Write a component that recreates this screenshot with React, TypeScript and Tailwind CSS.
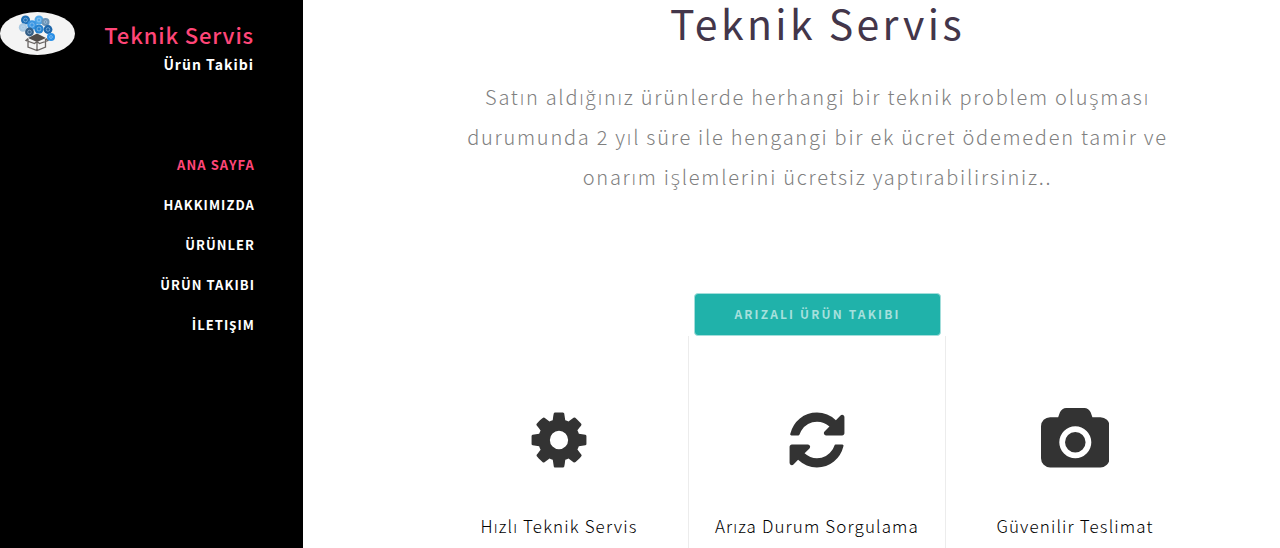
import type { ReactNode } from "react";

const navItems: { label: ReactNode; key: string; active?: boolean }[] = [
  { key: "home", label: "ANA SAYFA", active: true },
  { key: "about", label: "HAKKIMIZDA" },
  { key: "products", label: "ÜRÜNLER" },
  { key: "tracking", label: "ÜRÜN TAKIBI" },
  {
    key: "contact",
    label: (
      <>
        <span className="font-['Open_Sans',sans-serif] text-[13.5px]">İ</span>LETIŞIM
      </>
    ),
  },
];

function Logo() {
  const bubbles: [number, number, number, string][] = [
    [25.5, 20, 4.5, "#1f6fb5"],
    [39, 20, 4.5, "#4fa6e8"],
    [45.5, 22, 4, "#6b93b5"],
    [23, 27.5, 4.2, "#a9c9e2"],
    [32, 25, 4.8, "#3b97e3"],
    [39, 29, 4.6, "#2582cf"],
    [48, 29.5, 4.4, "#1d66aa"],
    [29.5, 32, 4.4, "#345f87"],
    [51, 37, 4, "#2a8fe6"],
  ];
  return (
    <svg viewBox="0 12 75 43" className="block h-[43px] w-[75px]">
      <ellipse cx="37.5" cy="33.5" rx="37.5" ry="21.5" fill="#f4f4f4" />
      <path d="M28 38l9-4.500 9 4.500-9 4z" fill="#514c49" />
      <path d="M28 39v8l9 3.500 8.500-3.500v-8M37 42v8.500M28 38.500l-2 2 8.500 3 2.500-2 2.500 2 8.500-3-2-2" fill="none" stroke="#6a6563" strokeWidth="1.3" />
      {bubbles.map(([x, y, r, c]) => (
        <g key={`${x}-${y}`}>
          <circle cx={x} cy={y} r={r} fill={c} />
          <circle cx={x} cy={y} r={r - 2.6} fill="none" stroke="#c3e0f7" strokeOpacity="0.6" strokeWidth="0.8" />
        </g>
      ))}
    </svg>
  );
}

function Feature({ label, viewBox, path, iconClass, className }: { label: string; viewBox: string; path: string; iconClass: string; className: string }) {
  return (
    <div className={`flex flex-col items-center pt-[72px] ${className}`}>
      <svg viewBox={viewBox} className={iconClass} fill="#333333">
        <path d={path} />
      </svg>
      <h3 className="mt-[38px] text-[17px] leading-8 font-light tracking-[1.12px] whitespace-nowrap text-black">{label}</h3>
    </div>
  );
}

const cog =
  "M1152 896q0-106-75-181t-181-75-181 75-75 181 75 181 181 75 181-75 75-181zm512-109v222q0 12-8 23t-20 13l-185 28q-19 54-39 91 35 50 107 138 10 12 10 25t-9 23q-27 37-99 108t-94 71q-12 0-26-9l-138-108q-44 23-91 38-16 136-29 186-7 28-36 28h-222q-14 0-24.5-8.5t-11.5-21.5l-28-184q-49-16-90-37l-141 107q-10 9-25 9-14 0-25-11-126-114-165-168-7-10-7-23 0-12 8-23 15-21 51-66.5t54-70.5q-27-50-41-99l-183-27q-13-2-21-12.5t-8-23.5v-222q0-12 8-23t19-13l186-28q14-46 39-92-40-57-107-138-10-12-10-24 0-10 9-23 26-36 98.5-107.5t94.5-71.5q13 0 26 10l138 107q44-23 91-38 16-136 29-186 7-28 36-28h222q14 0 24.5 8.5t11.5 21.5l28 184q49 16 90 37l142-107q9-9 24-9 13 0 25 10 129 119 165 170 7 8 7 22 0 12-8 23-15 21-51 66.5t-54 70.5q26 50 41 98l183 28q13 2 21 12.5t8 23.5z";
const refresh =
  "M1639 1056q0 5-1 7-64 268-268 434.5t-478 166.5q-146 0-282.5-55t-243.5-157l-129 129q-19 19-45 19t-45-19-19-45v-448q0-26 19-45t45-19h448q26 0 45 19t19 45-19 45l-137 137q71 66 161 102t187 36q134 0 250-65t186-179q11-17 53-117 8-23 30-23h192q13 0 22.5 9.5t9.5 22.5zm25-800v448q0 26-19 45t-45 19h-448q-26 0-45-19t-19-45 19-45l138-138q-148-137-349-137-134 0-250 65t-186 179q-11 17-53 117-8 23-30 23h-199q-13 0-22.5-9.5t-9.5-22.5v-7q65-268 270-434.5t480-166.5q146 0 284 55.5t245 156.5l130-129q19-19 45-19t45 19 19 45z";
const camera =
  "M960 672q119 0 203.5 84.5t84.5 203.5-84.5 203.5-203.5 84.5-203.5-84.5-84.5-203.5 84.5-203.5 203.5-84.5zm704-416q106 0 181 75t75 181v896q0 106-75 181t-181 75h-1408q-106 0-181-75t-75-181v-896q0-106 75-181t181-75h224l51-136q19-49 69.5-84.5t103.500-35.500h512q53 0 103.500 35.500t69.500 84.500l51 136h224zm-704 1152q185 0 316.500-131.500t131.500-316.500-131.500-316.500-316.500-131.500-316.500 131.500-131.500 316.500 131.500 316.500 316.500 131.500z";

export default function App() {
  return (
    <div className="flex h-[548px] w-full overflow-hidden bg-white font-['Noto_Sans_CJK_SC','Open_Sans',sans-serif]">
      <aside className="w-[303px] shrink-0 bg-black pr-12">
        <div className="flex items-start justify-between pt-3">
          <Logo />
          <div className="pt-[6px] pr-px text-right">
            <div className="text-[22px] leading-8 font-medium tracking-[0.85px] text-[#ff4678]">Teknik Servis</div>
            <div className="mt-[2px] text-[14px] leading-6 font-bold tracking-[1px] text-white">Ürün Takibi</div>
          </div>
        </div>
        <nav className="mt-[69px] flex flex-col text-right">
          {navItems.map((n) => (
            <a key={n.key} className={`h-10 text-[13px] leading-10 font-bold tracking-[1.05px] ${n.active ? "text-[#ff4678]" : "text-white"}`}>
              {n.label}
            </a>
          ))}
        </nav>
      </aside>
      <main className="flex flex-1 flex-col pl-[129px] text-center">
        <div className="flex w-[771px] flex-col items-center">
          <h1 className="h-[47px] text-[41px] leading-[44px] font-normal tracking-[3.4px] whitespace-nowrap text-[#43364a]">Teknik Servis</h1>
          <div className="mt-[30px] flex flex-col text-[20px] leading-10 font-light tracking-[1.75px] whitespace-nowrap text-[#808080]">
            <span>Satın aldığınız ürünlerde herhangi bir teknik problem oluşması</span>
            <span>durumunda 2 yıl süre ile hengangi bir ek ücret ödemeden tamir ve</span>
            <span>onarım işlemlerini ücretsiz yaptırabilirsiniz..</span>
          </div>
          <button className="mt-[96px] h-[43px] w-[247px] rounded-[4px] border border-[#a3dedb] bg-[#20b2aa] pb-[2px] text-[12px] font-bold tracking-[2.15px] text-[#a6e0dd]">
            ARIZALI ÜRÜN TAKIBI
          </button>
        </div>
        <div className="flex h-[212px] w-[772px]">
          <Feature className="w-[256px] pr-[2px]" viewBox="0 0 1792 1792" iconClass="h-16 w-16 shrink-0" path={cog} label="Hızlı Teknik Servis" />
          <Feature className="w-[258px] border-x border-[#ececec]" viewBox="0 0 1792 1792" iconClass="h-16 w-16 shrink-0" path={refresh} label="Arıza Durum Sorgulama" />
          <Feature className="w-[258px]" viewBox="0 0 1920 1792" iconClass="h-16 w-[68.6px] shrink-0" path={camera} label="Güvenilir Teslimat" />
        </div>
      </main>
    </div>
  );
}
